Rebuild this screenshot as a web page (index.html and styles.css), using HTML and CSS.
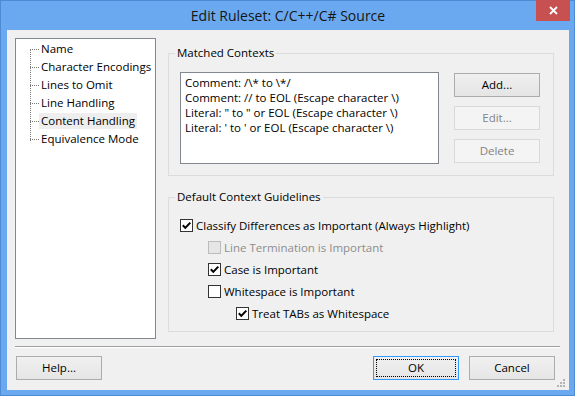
FILE: index.html
```html
<!DOCTYPE html>
<html>
<head>
<meta charset="utf-8">
<link rel="stylesheet" href="styles.css">
</head>
<body>
<div class="window">
  <div class="titlebar">
    <div class="title">Edit Ruleset: C/C++/C# Source</div>
    <div class="close">
      <svg width="9" height="9" viewBox="0 0 9 9"><path d="M1 1 L8 8 M8 1 L1 8" stroke="#fff" stroke-width="1.8" fill="none"/></svg>
    </div>
  </div>
  <div class="client">
    <div class="main">
      <div class="tree">
        <ul class="tree-list">
          <li class="node"><span class="label">Name</span></li>
          <li class="node"><span class="label">Character Encodings</span></li>
          <li class="node"><span class="label">Lines to Omit</span></li>
          <li class="node"><span class="label">Line Handling</span></li>
          <li class="node"><span class="label selected">Content Handling</span></li>
          <li class="node"><span class="label">Equivalence Mode</span></li>
        </ul>
      </div>
      <div class="panel">
        <fieldset class="group group-contexts">
          <legend>Matched Contexts</legend>
          <div class="contexts">
            <div class="listbox">
              <div class="item">Comment: /\* to \*/</div>
              <div class="item">Comment: // to EOL (Escape character \)</div>
              <div class="item">Literal: " to " or EOL (Escape character \)</div>
              <div class="item">Literal: ' to ' or EOL (Escape character \)</div>
            </div>
            <div class="side-buttons">
              <div class="btn">Add...</div>
              <div class="btn disabled">Edit...</div>
              <div class="btn disabled">Delete</div>
            </div>
          </div>
        </fieldset>
        <fieldset class="group group-guides">
          <legend>Default Context Guidelines</legend>
          <div class="check-row">
            <span class="box"><svg width="11" height="11" viewBox="0 0 11 11"><path d="M1.8 5.3 L4.3 7.9 L9.3 2.6" stroke="#000" stroke-width="2" fill="none"/></svg></span>
            <span class="text">Classify Differences as Important (Always Highlight)</span>
          </div>
          <div class="check-row indent1 disabled">
            <span class="box"></span>
            <span class="text">Line Termination is Important</span>
          </div>
          <div class="check-row indent1">
            <span class="box"><svg width="11" height="11" viewBox="0 0 11 11"><path d="M1.8 5.3 L4.3 7.9 L9.3 2.6" stroke="#000" stroke-width="2" fill="none"/></svg></span>
            <span class="text">Case is Important</span>
          </div>
          <div class="check-row indent1">
            <span class="box"></span>
            <span class="text">Whitespace is Important</span>
          </div>
          <div class="check-row indent2">
            <span class="box"><svg width="11" height="11" viewBox="0 0 11 11"><path d="M1.8 5.3 L4.3 7.9 L9.3 2.6" stroke="#000" stroke-width="2" fill="none"/></svg></span>
            <span class="text">Treat TABs as Whitespace</span>
          </div>
        </fieldset>
      </div>
    </div>
    <div class="separator"></div>
    <div class="footer">
      <div class="btn">Help...</div>
      <div class="spacer"></div>
      <div class="btn default">OK</div>
      <div class="btn">Cancel</div>
    </div>
    <svg class="grip" width="8" height="8" viewBox="0 0 8 8">
      <rect x="6" y="0" width="2" height="2" fill="#b4b4b4"/>
      <rect x="3" y="3" width="2" height="2" fill="#b4b4b4"/>
      <rect x="6" y="3" width="2" height="2" fill="#b4b4b4"/>
      <rect x="0" y="6" width="2" height="2" fill="#b4b4b4"/>
      <rect x="3" y="6" width="2" height="2" fill="#b4b4b4"/>
      <rect x="6" y="6" width="2" height="2" fill="#b4b4b4"/>
    </svg>
  </div>
</div>
</body>
</html>
```

FILE: styles.css
```css
* { box-sizing: border-box; }
html, body { margin: 0; padding: 0; }
body {
  width: 575px;
  height: 396px;
  overflow: hidden;
  font-family: "Open Sans", "Noto Sans", sans-serif;
  font-size: 11.5px;
  color: #000;
  background: #fff;
}
.window {
  width: 575px;
  height: 396px;
  background: #6aa9ef;
  border: 1px solid #4f8bd4;
  padding: 0 5px 5px 6px;
  display: flex;
  flex-direction: column;
}
.titlebar {
  height: 29px;
  display: grid;
  grid-template-columns: 1fr auto 1fr;
  align-items: center;
}
.title {
  grid-column: 2;
  font-size: 14px;
  line-height: 29px;
  color: #161616;
  white-space: nowrap;
}
.close {
  grid-column: 3;
  justify-self: end;
  align-self: start;
  width: 34px;
  height: 21px;
  margin-top: -1px;
  margin-right: -1px;
  background: #c75050;
  display: flex;
  align-items: center;
  justify-content: center;
}
.close svg { display: block; }
.client {
  flex: 1;
  background: #f0f0f0;
  position: relative;
  padding: 8px 9px 10px 8px;
  display: flex;
  flex-direction: column;
}
.main {
  display: flex;
  gap: 12px;
  height: 301px;
}
.tree {
  width: 141px;
  height: 301px;
  background: #fff;
  border: 1px solid #828790;
  padding-top: 1px;
}
.tree-list {
  list-style: none;
  margin: 0;
  padding: 0 0 0 14px;
  background-image: repeating-linear-gradient(to bottom, #7a7a7a 0 1px, transparent 1px 2px);
  background-size: 1px 91px;
  background-position: 14px 10px;
  background-repeat: no-repeat;
}
.node {
  height: 18px;
  display: flex;
  align-items: flex-start;
  white-space: nowrap;
}
.node::before {
  content: "";
  width: 9px;
  height: 1px;
  margin-top: 9px;
  background-image: repeating-linear-gradient(to right, #7a7a7a 0 1px, transparent 1px 2px);
}
.label {
  height: 16px;
  line-height: 16px;
  margin-top: 1px;
  padding: 0 2px;
  color: #000;
}
.label.selected { background: #eeeeee; }
.panel {
  width: 386px;
  display: flex;
  flex-direction: column;
}
.group {
  margin: 0;
  min-width: 0;
  border: 1px solid #dcdcdc;
}
.group legend {
  padding: 0 2px;
  margin-left: -5px;
  line-height: 16px;
  height: 16px;
}
.group-contexts {
  margin-top: 7px;
  padding: 11px 13px 11px 11px;
}
.group-guides {
  margin-top: 13px;
  padding: 10px 13px 6px 11px;
}
.contexts { display: flex; }
.listbox {
  width: 259px;
  height: 92px;
  background: #fff;
  border: 1px solid #828790;
  padding: 2px 4px;
}
.item {
  line-height: 15px;
  white-space: nowrap;
}
.side-buttons {
  margin-left: 15px;
  margin-top: 1px;
  display: flex;
  flex-direction: column;
  gap: 9px;
}
.btn {
  width: 86px;
  height: 24px;
  border: 1px solid #acacac;
  background: linear-gradient(to bottom, #f0f0f0, #e5e5e5);
  display: flex;
  align-items: center;
  justify-content: center;
  line-height: 16px;
}
.btn.disabled {
  border-color: #d9d9d9;
  background: #f4f4f4;
  color: #838383;
}
.btn.default {
  border-color: #3399ff;
  outline: 1px dotted #000;
  outline-offset: -4px;
}
.check-row {
  height: 22px;
  display: flex;
  align-items: flex-start;
  white-space: nowrap;
}
.check-row .box {
  width: 13px;
  height: 13px;
  margin-top: 4px;
  border: 1px solid #333;
  background: #fff;
  flex: none;
}
.check-row .box svg { display: block; }
.check-row .text {
  margin-left: 3px;
  line-height: 21px;
}
.check-row.indent1 { margin-left: 28px; }
.check-row.indent2 { margin-left: 56px; }
.check-row.disabled .box {
  border-color: #bcbcbc;
  background: #e6e6e6;
}
.check-row.disabled .text { color: #8d8d8d; }
.separator {
  margin-top: 7px;
  height: 2px;
  border-top: 1px solid #a0a0a0;
  border-bottom: 1px solid #fff;
}
.footer {
  margin-top: 8px;
  display: flex;
  gap: 10px;
  padding: 0 5px 0 1px;
}
.spacer { flex: 1; }
.grip {
  position: absolute;
  right: 4px;
  bottom: 3px;
}
```
